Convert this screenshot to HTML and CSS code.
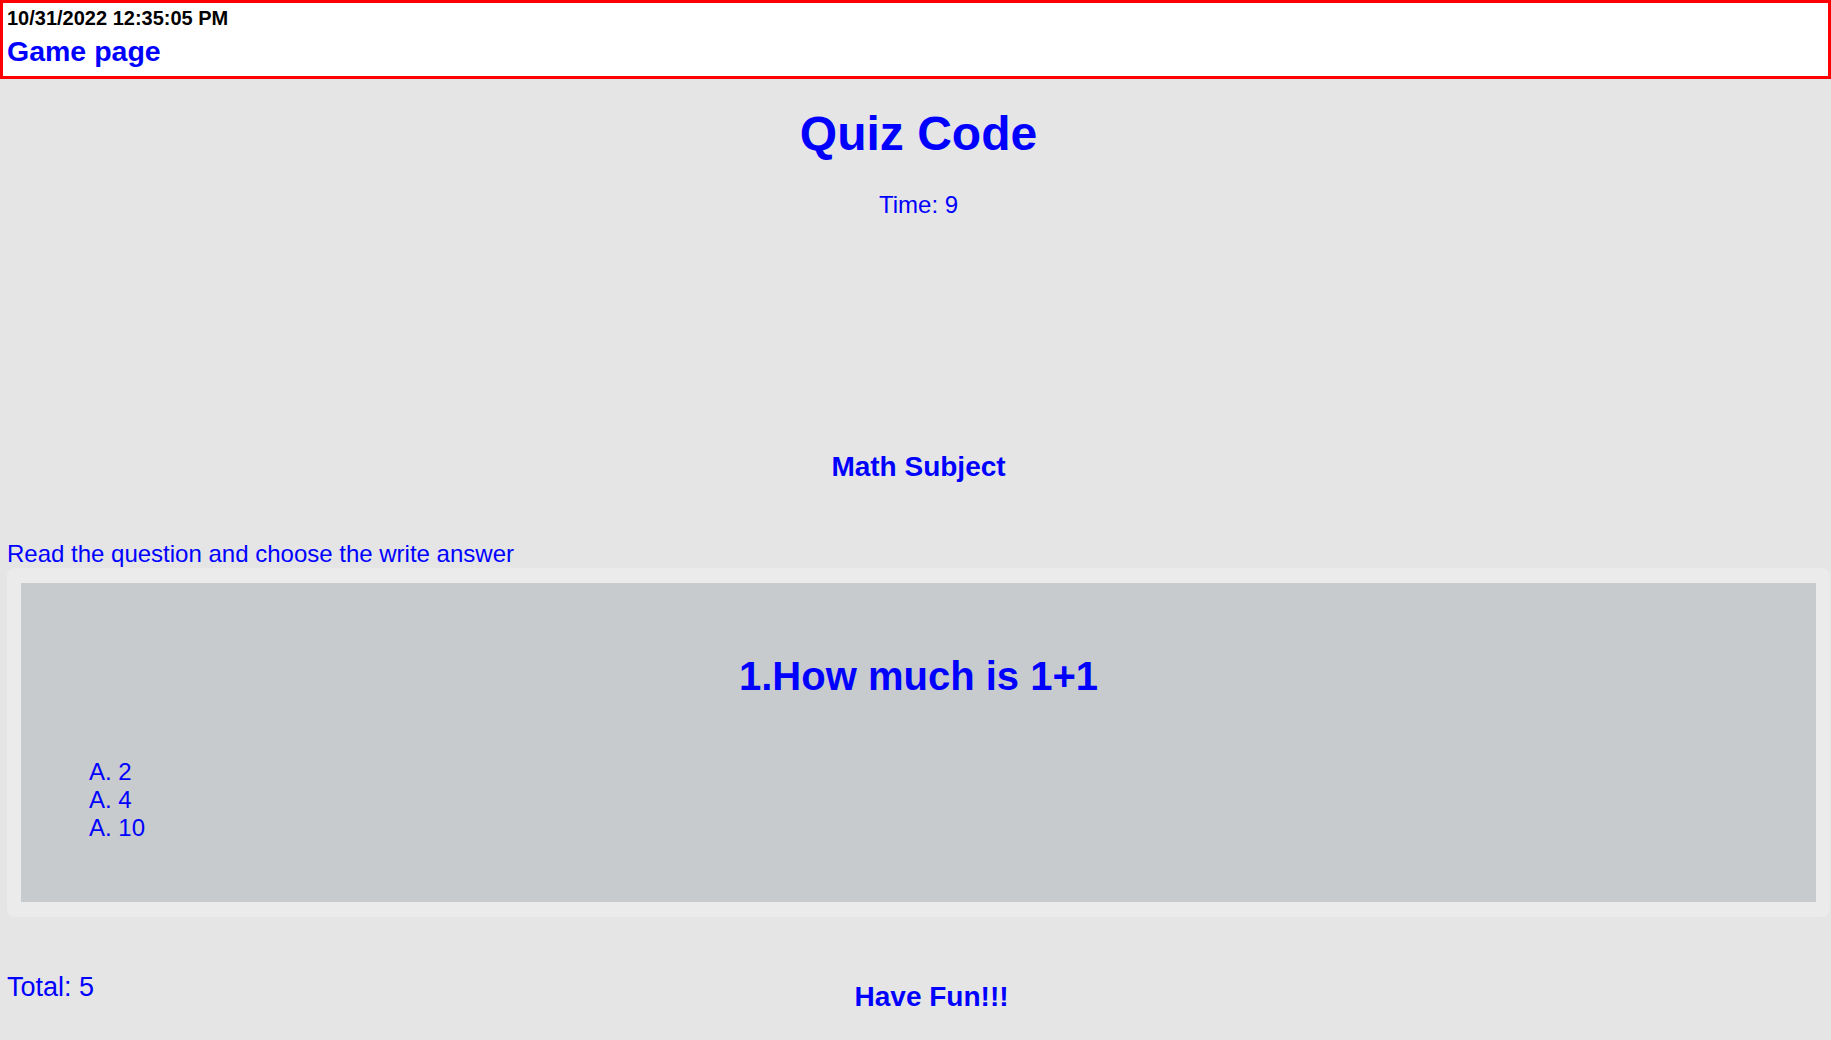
FILE: index.html
```html
<!DOCTYPE html>
<html lang="en">
<head>
<meta charset="utf-8">
<title>Game page</title>
<link rel="stylesheet" href="styles.css">
</head>
<body>
<header class="top-bar">
  <div class="clock">10/31/2022 12:35:05 PM</div>
  <div class="page-name">Game page</div>
</header>
<main class="main">
  <h1 class="title">Quiz Code</h1>
  <p class="timer">Time: 9</p>
  <h2 class="subject">Math Subject</h2>
  <p class="instructions">Read the question and choose the write answer</p>
  <section class="card">
    <div class="question-box">
      <h2 class="question">1.How much is 1+1</h2>
      <ul class="answers">
        <li>A. 2</li>
        <li>A. 4</li>
        <li>A. 10</li>
      </ul>
    </div>
  </section>
  <footer class="footer">
    <div class="total">Total: 5</div>
    <div class="fun">Have Fun!!!</div>
  </footer>
</main>
</body>
</html>
```

FILE: styles.css
```css
html, body {
  margin: 0;
  padding: 0;
}
body {
  background: #e5e5e5;
  font-family: "Liberation Sans", Arial, sans-serif;
  color: #0000ff;
}
.top-bar {
  background: #ffffff;
  border: 3px solid #ff0000;
  padding: 4px 4px 9px;
}
.clock {
  font-size: 20px;
  line-height: 23px;
  font-weight: bold;
  color: #000000;
}
.page-name {
  margin-top: 5px;
  font-size: 28.5px;
  line-height: 32px;
  font-weight: bold;
  color: #0000ff;
}
.main {
  padding: 0 1px 0 7px;
}
.title {
  margin: 27px 0 0;
  font-size: 48px;
  line-height: 55px;
  font-weight: bold;
  text-align: center;
}
.timer {
  margin: 30px 0 0;
  font-size: 24px;
  line-height: 28px;
  text-align: center;
}
.subject {
  margin: 232px 0 0;
  font-size: 28px;
  line-height: 32px;
  font-weight: bold;
  text-align: center;
}
.instructions {
  margin: 57px 0 0;
  font-size: 24px;
  line-height: 28px;
}
.card {
  background: #ebebeb;
  border-radius: 8px;
  padding: 15px 14px;
}
.question-box {
  background: #c8cbce;
  padding: 70px 0 60px 68px;
}
.question {
  margin: 0;
  padding-right: 68px;
  font-size: 40px;
  line-height: 46px;
  font-weight: bold;
  text-align: center;
}
.answers {
  list-style: none;
  margin: 59px 0 0;
  padding: 0;
  font-size: 24px;
  line-height: 28px;
}
.footer {
  display: flex;
  align-items: flex-start;
  margin-top: 53px;
}
.total {
  margin-top: 2px;
  font-size: 27px;
  line-height: 30px;
}
.fun {
  flex: 1;
  margin: 11px 61px 0 0;
  font-size: 28px;
  line-height: 32px;
  font-weight: bold;
  text-align: center;
}
```
